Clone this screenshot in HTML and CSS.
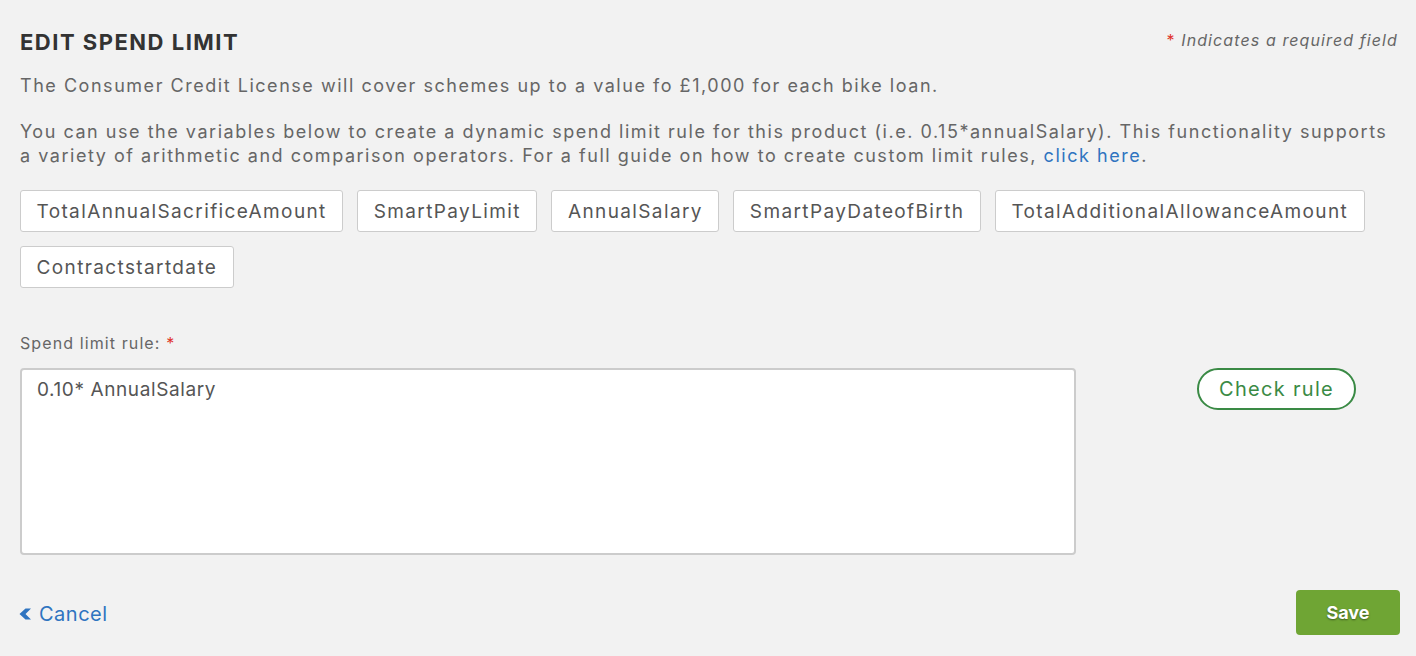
FILE: index.html
```html
<!DOCTYPE html>
<html lang="en">
<head>
<meta charset="utf-8">
<title>Edit spend limit</title>
<link rel="stylesheet" href="styles.css">
</head>
<body>
<main class="panel">
  <header class="head">
    <h1 class="title">EDIT SPEND LIMIT</h1>
    <p class="required-note"><span class="star">*</span> Indicates a required field</p>
  </header>
  <p class="text text-first">The Consumer Credit License will cover schemes up to a value fo £1,000 for each bike loan.</p>
  <p class="text text-second">You can use the variables below to create a dynamic spend limit rule for this product (i.e. 0.15*annualSalary). This functionality supports a variety of arithmetic and comparison operators. For a full guide on how to create custom limit rules, <a class="link" href="#">click here</a>.</p>
  <div class="chips">
    <button class="chip">TotalAnnualSacrificeAmount</button>
    <button class="chip">SmartPayLimit</button>
    <button class="chip">AnnualSalary</button>
    <button class="chip">SmartPayDateofBirth</button>
    <button class="chip">TotalAdditionalAllowanceAmount</button>
    <button class="chip">Contractstartdate</button>
  </div>
  <label class="label" for="rule">Spend limit rule: <span class="star">*</span></label>
  <div class="rule-row">
    <textarea id="rule" class="rule-input">0.10* AnnualSalary</textarea>
    <div class="rule-side">
      <button class="check-btn">Check rule</button>
    </div>
  </div>
  <footer class="actions">
    <a class="cancel" href="#"><svg class="chev" viewBox="0 0 12 14" width="12" height="14"><path d="M12 1.5 L6.5 1.5 L0.5 7 L6.5 12.5 L12 12.5 L6.5 7 Z" fill="#2f74c0"/></svg>Cancel</a>
    <button class="save">Save</button>
  </footer>
</main>
</body>
</html>
```
FILE: styles.css
```css
* { box-sizing: border-box; }
html, body { margin: 0; padding: 0; }
body {
  background: #f2f2f2;
  font-family: Inter, "Noto Sans", "Liberation Sans", sans-serif;
  color: #666;
}
.panel {
  padding: 24px 16px 0 20px;
}
.head {
  display: flex;
  justify-content: space-between;
  align-items: flex-start;
}
.title {
  margin: 4px 0 0;
  font-size: 22px;
  font-weight: 700;
  letter-spacing: 1.5px;
  color: #333;
  line-height: 28px;
}
.required-note {
  margin: 4px 2px 0 0;
  font-size: 16px;
  font-style: italic;
  letter-spacing: 1.1px;
  color: #666;
  line-height: 24px;
}
.star { color: #e0332b; font-style: normal; }
.text {
  margin: 0;
  font-size: 18px;
  letter-spacing: 1.53px;
  line-height: 24px;
  color: #666;
}
.text-first { margin-top: 18px; }
.text-second { margin-top: 22px; }
.link { color: #2f74c0; text-decoration: none; }
.chips {
  display: flex;
  flex-wrap: wrap;
  gap: 14px;
  margin-top: 22px;
}
.chip {
  height: 42px;
  padding: 0 15.5px;
  background: #fff;
  border: 1.5px solid #ccc;
  border-radius: 3px;
  font-family: inherit;
  font-size: 19px;
  letter-spacing: 1.38px;
  color: #555;
}
.label {
  display: block;
  margin-top: 45px;
  font-size: 16px;
  letter-spacing: 1.1px;
  line-height: 20px;
  color: #666;
}
.rule-row {
  display: flex;
  margin-top: 15px;
}
.rule-input {
  width: 1056px;
  height: 187px;
  padding: 8px 15px;
  border: 2px solid #ccc;
  border-radius: 4px;
  background: #fff;
  font-family: inherit;
  font-size: 19px;
  letter-spacing: 0.6px;
  color: #555;
  resize: none;
}
.rule-side {
  padding-left: 121px;
}
.check-btn {
  width: 159px;
  height: 42px;
  border: 2px solid #3a8a45;
  border-radius: 21px;
  background: #fff;
  color: #3a8a45;
  font-family: inherit;
  font-size: 20px;
  letter-spacing: 1.3px;
}
.actions {
  display: flex;
  justify-content: space-between;
  align-items: center;
  margin-top: 35px;
}
.cancel {
  display: flex;
  align-items: center;
  gap: 8px;
  padding-top: 3px;
  color: #2f74c0;
  text-decoration: none;
  font-size: 20px;
  letter-spacing: 0.5px;
}
.chev { margin-left: -1px; }
.save {
  width: 104px;
  height: 45px;
  border: none;
  border-radius: 4px;
  background: #6fa534;
  color: #fff;
  font-family: inherit;
  font-size: 18px;
  font-weight: 700;
  text-shadow: 0 1px 2px rgba(0,0,0,0.45);
}
```
